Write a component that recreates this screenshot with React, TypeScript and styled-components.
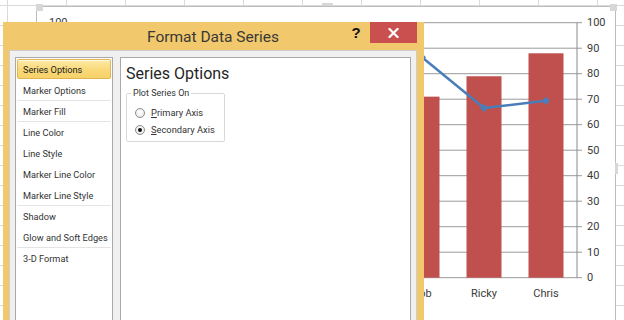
import React from 'react';
import styled, { createGlobalStyle, css } from 'styled-components';

const GlobalStyle = createGlobalStyle`
  html, body {
    margin: 0;
    padding: 0;
    width: 624px;
    height: 320px;
    overflow: hidden;
    background: #fff;
  }
  body {
    font-family: Roboto, "Liberation Sans", sans-serif;
  }
`;

const Sheet = styled.div`
  position: relative;
  width: 624px;
  height: 320px;
  overflow: hidden;
  background-color: #fff;
  background-image:
    linear-gradient(to right, #dadada 1px, transparent 1px),
    linear-gradient(to bottom, #dadada 1px, transparent 1px);
  background-size: 59px 20px;
  background-position: 7px 5px;
`;

const ChartObject = styled.div`
  position: absolute;
  left: 36px;
  top: 6px;
  width: 580px;
  height: 330px;
  box-sizing: border-box;
  border: 1px solid #bcbcbc;
  background: #fff;
`;

const ChartSvg = styled.svg`
  position: absolute;
  left: -1px;
  top: -1px;
  display: block;
`;

const Handle = styled.span<{ $w: number; $h: number }>`
  position: absolute;
  width: ${(p) => p.$w}px;
  height: ${(p) => p.$h}px;
  background-image: radial-gradient(circle, #a8a8a8 0.6px, transparent 0.8px);
  background-size: 2px 2px;
  background-color: #fff;
`;

const Dialog = styled.section`
  position: absolute;
  left: 3px;
  top: 22px;
  width: 421px;
  height: 310px;
  box-sizing: border-box;
  background: #f1c96c;
  display: flex;
  flex-direction: column;
  padding: 0 7px 0 6px;
`;

const TitleBar = styled.header`
  height: 28px;
  display: grid;
  grid-template-columns: 1fr auto 1fr;
  align-items: center;
`;

const Title = styled.h1`
  grid-column: 2;
  margin: 0;
  font-family: Roboto, "Liberation Sans", sans-serif;
  font-size: 15.5px;
  font-weight: 400;
  color: #383838;
  line-height: 20px;
  padding-top: 2px;
`;

const TitleButtons = styled.div`
  grid-column: 3;
  justify-self: end;
  align-self: start;
  display: flex;
  align-items: flex-start;
`;

const HelpButton = styled.span`
  width: 14px;
  height: 21px;
  margin-right: 7px;
  font-family: "Liberation Sans", Arial, sans-serif;
  font-weight: 700;
  font-size: 15px;
  line-height: 21px;
  text-align: center;
  color: #111;
`;

const CloseButton = styled.span`
  width: 47px;
  height: 21px;
  background: #c9504f;
  display: flex;
  align-items: center;
  justify-content: center;
`;

const Body = styled.div`
  flex: 1;
  display: flex;
  gap: 7px;
  padding: 6px 5px 0 5px;
  background: #f0f0f0;
  border: 1px solid #cdcdcd;
  border-bottom: none;
`;

const ListBox = styled.nav`
  width: 98px;
  flex: none;
  box-sizing: border-box;
  border: 1px solid #a9a9a9;
  background: #fff;
  padding: 1px;
  display: flex;
  flex-direction: column;
`;

const ListItem = styled.div<{ $selected?: boolean; $sep?: boolean }>`
  height: 21px;
  box-sizing: border-box;
  display: flex;
  align-items: center;
  padding-left: 5px;
  font-size: 9.2px;
  color: #333;
  white-space: nowrap;
  border: 1px solid transparent;
  ${(p) =>
    p.$sep &&
    css`
      border-bottom-color: #e4e4e4;
    `}
  ${(p) =>
    p.$selected &&
    css`
      height: 20px;
      margin-bottom: 1px;
      border: 1px solid #e2b552;
      border-radius: 2px;
      background: linear-gradient(#fdeba9, #f9d877 55%, #f7d26a);
      box-shadow: inset 0 1px 0 rgba(255, 255, 255, 0.7);
      color: #222;
    `}
`;

const Panel = styled.div`
  flex: 1;
  box-sizing: border-box;
  border: 1px solid #a9a9a9;
  background: #fff;
  padding: 6px 0 0 5px;
`;

const Heading = styled.h2`
  margin: 0 0 3px;
  font-size: 16px;
  font-weight: 400;
  line-height: 20px;
  color: #262626;
`;

const GroupBox = styled.fieldset`
  width: 99px;
  box-sizing: border-box;
  margin: 0;
  padding: 5px 0 3px 8px;
  border: 1px solid #d5d9dc;
  border-radius: 2px;
`;

const Legend = styled.legend`
  padding: 0 2px;
  margin-left: -4px;
  font-size: 9px;
  line-height: 12px;
  color: #333;
`;

const RadioRow = styled.label`
  display: flex;
  align-items: center;
  gap: 6px;
  height: 17px;
  font-size: 9.3px;
  color: #333;
  white-space: nowrap;
`;

const RadioDot = styled.span<{ $checked?: boolean }>`
  position: relative;
  width: 10px;
  height: 10px;
  box-sizing: border-box;
  border-radius: 50%;
  border: 1px solid #8a8b8c;
  background: radial-gradient(circle at 50% 40%, #ffffff, #e6e6e6);
  flex: none;
  ${(p) =>
    p.$checked &&
    css`
      &::after {
        content: '';
        position: absolute;
        left: 2px;
        top: 2px;
        width: 4px;
        height: 4px;
        border-radius: 50%;
        background: #111;
      }
    `}
`;

const groups: string[][] = [
  ['Series Options', 'Marker Options'],
  ['Marker Fill'],
  ['Line Color', 'Line Style', 'Marker Line Color', 'Marker Line Style'],
  ['Shadow', 'Glow and Soft Edges'],
  ['3-D Format'],
];

const TOP = 22.7;
const STEP = 25.5;
const BASE = TOP + STEP * 10;
const yOf = (v: number) => BASE - (v / 10) * STEP;

const bars = [
  { name: 'Bob', cx: 422, v: 71 },
  { name: 'Ricky', cx: 484, v: 79 },
  { name: 'Chris', cx: 546, v: 88 },
];

const linePts = [
  { x: 422, y: 57.3 },
  { x: 484, y: 108 },
  { x: 546, y: 100.7 },
];

const Diamond = ({ x, y }: { x: number; y: number }) => (
  <polygon points={`${x},${y - 4} ${x + 4},${y} ${x},${y + 4} ${x - 4},${y}`} fill="#4a7ebb" />
);

const Chart = () => (
  <ChartSvg width={580} height={330} viewBox="36 6 580 330">
    {Array.from({ length: 11 }, (_, i) => {
      const y = TOP + i * STEP;
      return <line key={`g${i}`} x1={73} x2={582} y1={y} y2={y} stroke="#9a9a9a" strokeWidth={1} />;
    })}
    <line x1={577} x2={577} y1={TOP} y2={BASE} stroke="#8a8a8a" strokeWidth={1} />
    {Array.from({ length: 11 }, (_, i) => (
      <text
        key={`l${i}`}
        x={587}
        y={TOP + i * STEP}
        dominantBaseline="central"
        fontFamily="Roboto, 'Liberation Sans', sans-serif"
        fontSize={11}
        fill="#3a3a3a"
      >
        {100 - i * 10}
      </text>
    ))}
    <text x={49} y={TOP} dominantBaseline="central" fontFamily="Roboto, 'Liberation Sans', sans-serif" fontSize={11} fill="#3a3a3a">
      100
    </text>
    {bars.map((b) => (
      <rect key={b.name} x={b.cx - 17.5} y={yOf(b.v)} width={35} height={BASE - yOf(b.v)} fill="#c0504d" />
    ))}
    {bars.map((b) => (
      <text
        key={`c${b.name}`}
        x={b.cx}
        y={293}
        textAnchor="middle"
        dominantBaseline="central"
        fontFamily="Roboto, 'Liberation Sans', sans-serif"
        fontSize={11}
        fill="#3a3a3a"
      >
        {b.name}
      </text>
    ))}
    <polyline
      points={linePts.map((p) => `${p.x},${p.y}`).join(' ')}
      fill="none"
      stroke="#4a7ebb"
      strokeWidth={2.5}
      strokeLinejoin="round"
    />
    {linePts.map((p) => (
      <Diamond key={p.x} x={p.x} y={p.y} />
    ))}
  </ChartSvg>
);

export default function App() {
  let idx = 0;
  return (
    <>
      <GlobalStyle />
      <Sheet>
        <ChartObject>
          <Chart />
          <Handle $w={7} $h={7} style={{ left: -1, top: -3 }} />
          <Handle $w={11} $h={3} style={{ left: 285, top: -4 }} />
          <Handle $w={7} $h={7} style={{ right: -2, top: -3 }} />
          <Handle $w={3} $h={11} style={{ right: -3, top: 156 }} />
        </ChartObject>
        <Dialog>
          <TitleBar>
            <Title>Format Data Series</Title>
            <TitleButtons>
              <HelpButton>?</HelpButton>
              <CloseButton>
                <svg width="11" height="10" viewBox="0 0 11 10">
                  <path d="M1.5 1 L9.5 9 M9.5 1 L1.5 9" stroke="#fff" strokeWidth="2.2" strokeLinecap="square" />
                </svg>
              </CloseButton>
            </TitleButtons>
          </TitleBar>
          <Body>
            <ListBox>
              {groups.map((g, gi) =>
                g.map((label, li) => {
                  const selected = idx++ === 0;
                  const sep = li === g.length - 1 && gi < groups.length - 1;
                  return (
                    <ListItem key={label} $selected={selected} $sep={sep}>
                      {label}
                    </ListItem>
                  );
                })
              )}
            </ListBox>
            <Panel>
              <Heading>Series Options</Heading>
              <GroupBox>
                <Legend>Plot Series On</Legend>
                <RadioRow>
                  <RadioDot />
                  <span>
                    <u>P</u>rimary Axis
                  </span>
                </RadioRow>
                <RadioRow>
                  <RadioDot $checked />
                  <span>
                    <u>S</u>econdary Axis
                  </span>
                </RadioRow>
              </GroupBox>
            </Panel>
          </Body>
        </Dialog>
      </Sheet>
    </>
  );
}
